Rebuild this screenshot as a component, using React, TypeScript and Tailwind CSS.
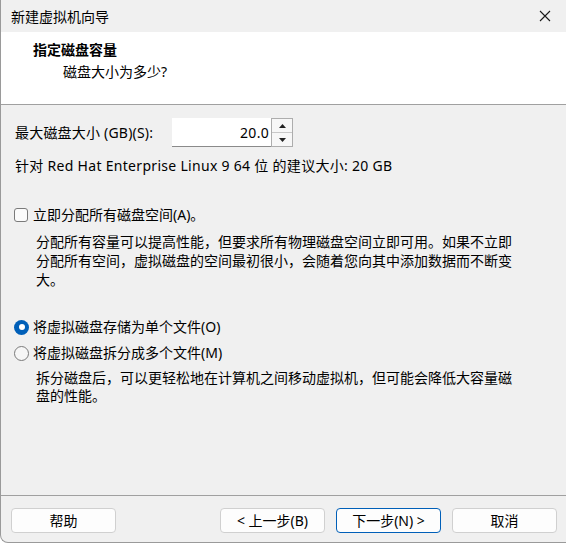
import React from "react";

const font = { fontFamily: '"Noto Sans", "Noto Sans CJK SC", sans-serif' };

const Button: React.FC<{ label: string; primary?: boolean }> = ({ label, primary }) => (
    <button
        className={`w-[105px] h-[25px] rounded-[4px] bg-[#fdfdfd] text-[14px] leading-none text-black flex items-center justify-center border ${
            primary ? "border-[#005fb8]" : "border-[#d0d0d0]"
        }`}
    >
        {label}
    </button>
);

export default function App() {
    return (
        <div
            className="w-[566px] h-[543px] bg-[#f0f0f0] border-l border-b border-[#9a9a9a] rounded-bl-[8px] flex flex-col text-black text-[14px] overflow-hidden"
            style={font}
        >
            {/* title bar */}
            <div className="h-[32px] flex items-center justify-between pl-[10px] pr-[14px] shrink-0">
                <span className="text-[14px]">新建虚拟机向导</span>
                <svg width="12" height="12" viewBox="0 0 12 12" className="mr-[1px]">
                    <path d="M1 1 L11 11 M11 1 L1 11" stroke="#1a1a1a" strokeWidth="1.1" />
                </svg>
            </div>

            {/* header */}
            <div className="h-[73px] bg-white border-b border-[#a0a0a0] shrink-0 pt-[8px]">
                <div className="pl-[32px] font-bold leading-[20px]">指定磁盘容量</div>
                <div className="pl-[62px] mt-[2px] leading-[20px]">磁盘大小为多少?</div>
            </div>

            {/* body */}
            <div className="flex-1 pl-[14px]">
                <div className="flex items-center mt-[13px] h-[29px]">
                    <span className="w-[157px] leading-[20px] tracking-[0.2px]">最大磁盘大小 (GB)(S):</span>
                    <div className="w-[99px] h-[29px] bg-white border-b border-[#8a8a8a] flex items-center justify-end pr-[2px] tracking-[0.3px]">
                        20.0
                    </div>
                    <div className="w-[22px] h-[29px] border border-[#adadad] bg-[#f7f7f7] flex flex-col">
                        <div className="flex-1 flex items-center justify-center border-b border-[#c8c8c8]">
                            <svg width="7" height="4" viewBox="0 0 7 4">
                                <path d="M0 4 L3.5 0 L7 4 Z" fill="#222" />
                            </svg>
                        </div>
                        <div className="flex-1 flex items-center justify-center">
                            <svg width="7" height="4" viewBox="0 0 7 4">
                                <path d="M0 0 L3.5 4 L7 0 Z" fill="#222" />
                            </svg>
                        </div>
                    </div>
                </div>

                <div className="mt-[9px] leading-[20px] tracking-[0.3px]">
                    针对 Red Hat Enterprise Linux 9 64 位 的建议大小: 20 GB
                </div>

                <div className="mt-[29px] flex items-center h-[20px]">
                    <span className="w-[14px] h-[14px] ml-[-1px] rounded-[3px] border border-[#7a7a7a] bg-[#fbfbfb]" />
                    <span className="ml-[5px] leading-[20px]">立即分配所有磁盘空间(A)。</span>
                </div>

                <p className="mt-[7px] ml-[21px] w-[480px] leading-[19px]">
                    分配所有容量可以提高性能，但要求所有物理磁盘空间立即可用。如果不立即分配所有空间，虚拟磁盘的空间最初很小，会随着您向其中添加数据而不断变大。
                </p>

                <div className="mt-[28px] flex items-center h-[20px]">
                    <span className="w-[15px] h-[15px] ml-[-1px] rounded-full bg-[#005fb8] flex items-center justify-center">
                        <span className="w-[6px] h-[6px] rounded-full bg-white" />
                    </span>
                    <span className="ml-[4px] leading-[20px]">将虚拟磁盘存储为单个文件(O)</span>
                </div>

                <div className="mt-[6px] flex items-center h-[20px]">
                    <span className="w-[15px] h-[15px] ml-[-1px] rounded-full border border-[#7a7a7a] bg-[#f6f6f6]" />
                    <span className="ml-[4px] leading-[20px]">将虚拟磁盘拆分成多个文件(M)</span>
                </div>

                <p className="mt-[6px] ml-[21px] w-[480px] leading-[18px]">
                    拆分磁盘后，可以更轻松地在计算机之间移动虚拟机，但可能会降低大容量磁盘的性能。
                </p>
            </div>

            {/* footer */}
            <div className="shrink-0 border-t border-[#a0a0a0] pt-[12px] pb-[9px] pl-[10px] pr-[9px] flex">
                <Button label="帮助" />
                <div className="flex-1" />
                <div className="flex gap-[11px]">
                    <Button label="< 上一步(B)" />
                    <Button label="下一步(N) >" primary />
                    <Button label="取消" />
                </div>
            </div>
        </div>
    );
}
